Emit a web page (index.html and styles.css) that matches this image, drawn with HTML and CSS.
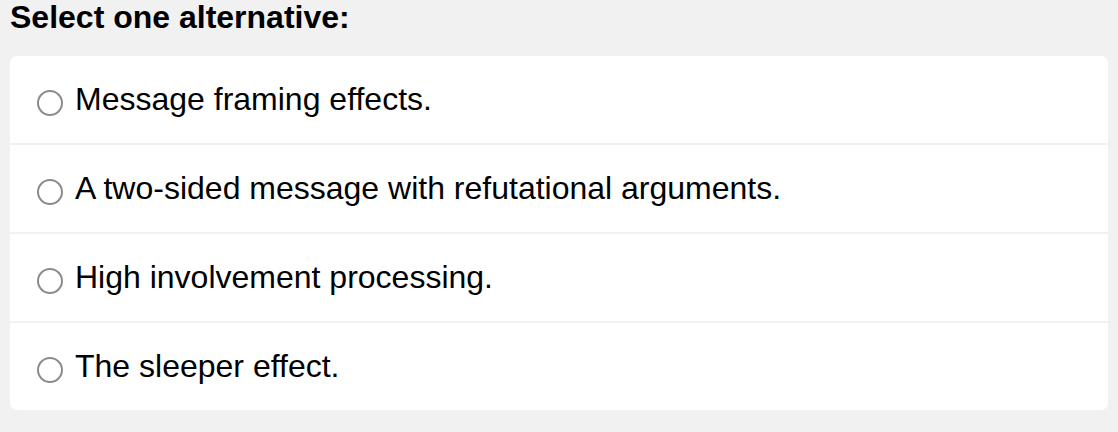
FILE: index.html
```html
<!DOCTYPE html>
<html>
<head>
<meta charset="utf-8">
<link rel="stylesheet" href="styles.css">
</head>
<body>
<div class="page">
  <h1 class="title">Select one alternative:</h1>
  <div class="options">
    <label class="option"><span class="radio"></span><span class="text">Message framing effects.</span></label>
    <label class="option"><span class="radio"></span><span class="text">A two-sided message with refutational arguments.</span></label>
    <label class="option"><span class="radio"></span><span class="text">High involvement processing.</span></label>
    <label class="option"><span class="radio"></span><span class="text">The sleeper effect.</span></label>
  </div>
</div>
</body>
</html>
```

FILE: styles.css
```css
html, body {
  margin: 0;
  padding: 0;
  background: #f1f1f1;
}
body {
  font-family: "Liberation Sans", Arial, Helvetica, sans-serif;
  color: #000;
}
.page {
  padding: 0 10px;
}
.title {
  margin: 0;
  padding-left: 0;
  font-size: 32px;
  font-weight: bold;
  line-height: 34px;
  height: 56px;
  box-sizing: border-box;
}
.options {
  display: flex;
  flex-direction: column;
  gap: 2px;
  border-radius: 7px;
  overflow: hidden;
}
.option {
  display: flex;
  align-items: center;
  gap: 12px;
  background: #fff;
  height: 87px;
  box-sizing: border-box;
  padding-left: 27px;
  padding-bottom: 2px;
}
.radio {
  width: 26px;
  height: 26px;
  box-sizing: border-box;
  border: 2px solid #8b8b8b;
  border-radius: 50%;
  background: #fff;
  flex: none;
  margin-top: 8px;
}
.text {
  font-size: 32px;
  line-height: 36px;
}
```
